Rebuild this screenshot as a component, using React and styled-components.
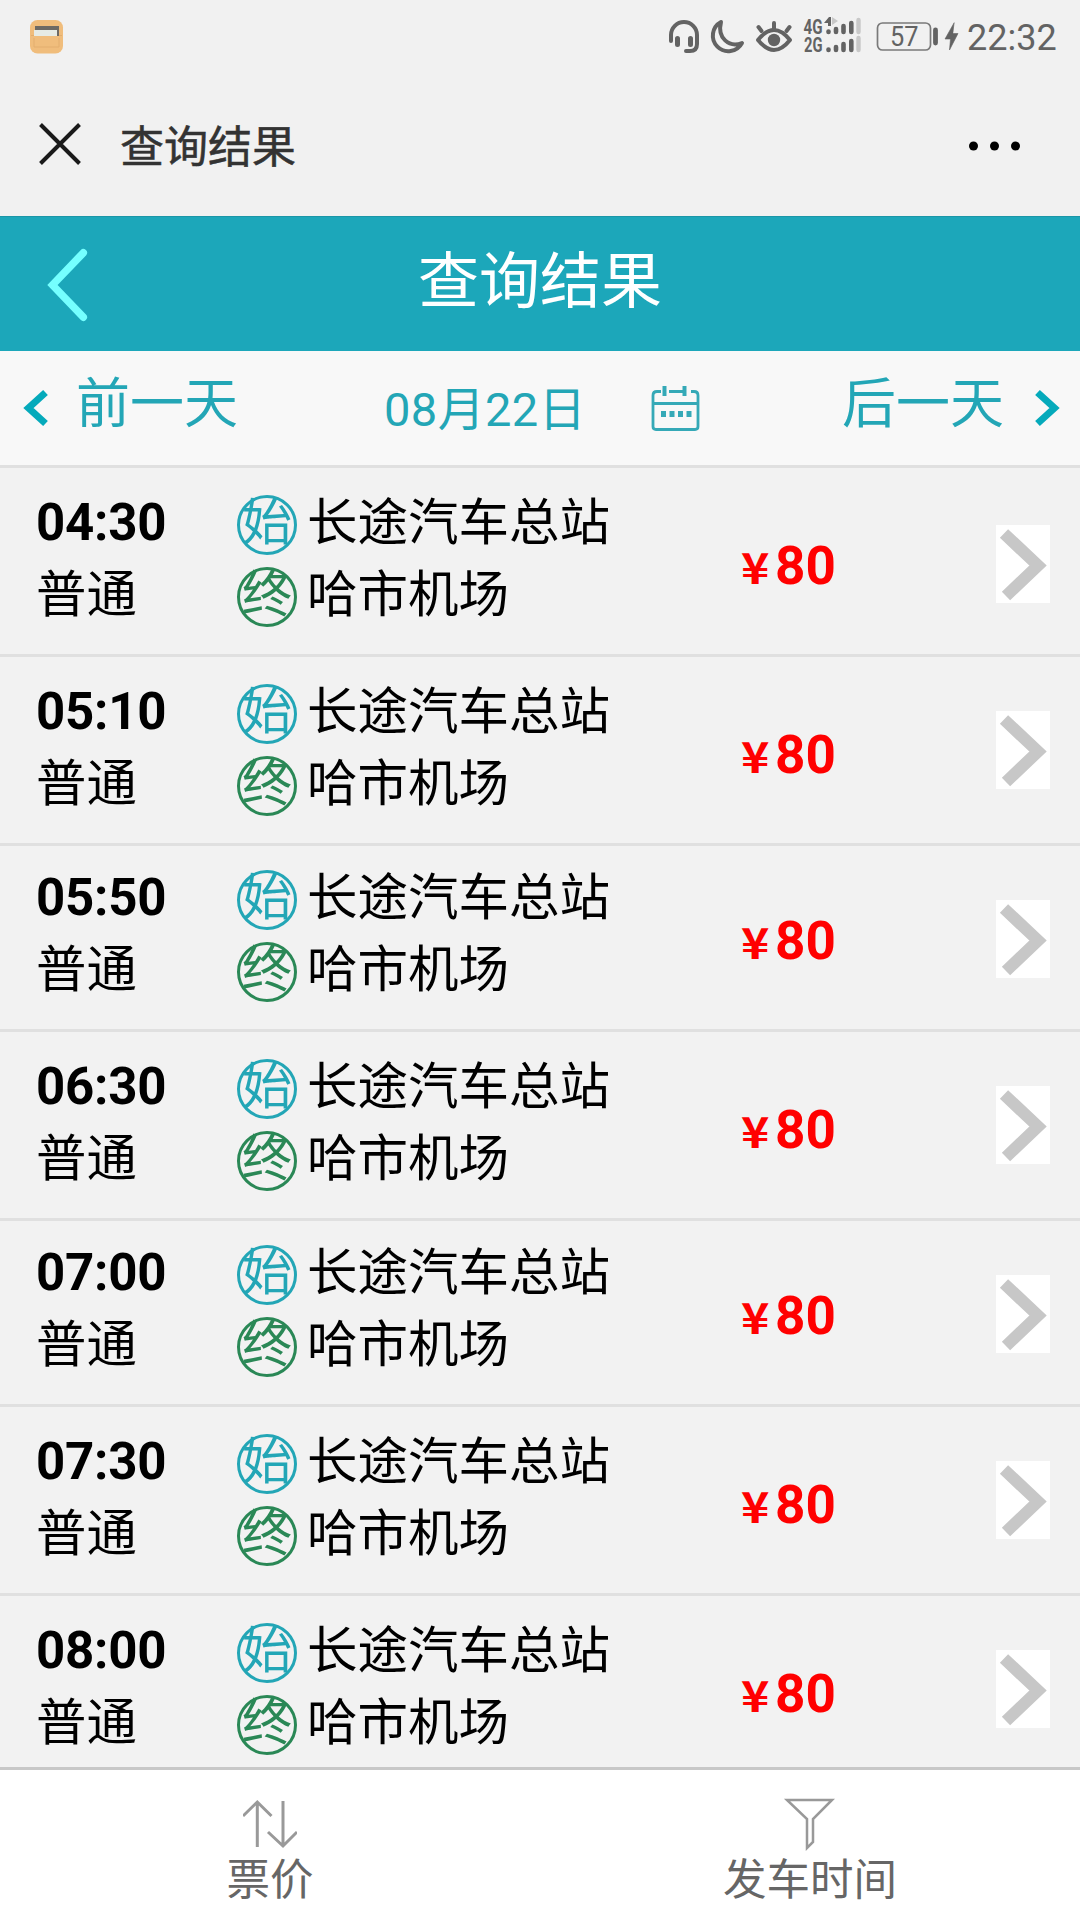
import React from 'react';
import styled, { createGlobalStyle } from 'styled-components';

const GlobalStyle = createGlobalStyle`
  * { box-sizing: border-box; }
  body { margin: 0; background: #f1f1f1; }
`;

const Screen = styled.div`
  width: 1080px;
  height: 1920px;
  display: flex;
  flex-direction: column;
  overflow: hidden;
  background: #f1f1f1;
  font-family: Roboto, "Noto Sans CJK SC", sans-serif;
  color: #000;
`;

const StatusBar = styled.div`
  height: 72px;
  flex: none;
  display: flex;
  justify-content: space-between;
  padding: 0 24px 0 30px;
`;

const StatusIcons = styled.svg`
  display: block;
  flex: none;
`;

const StatusRight = styled.div`
  display: flex;
  color: #636363;
`;

const Clock = styled.span`
  width: 90px;
  padding-left: 1px;
  font-size: 36px;
  line-height: 76px;
  white-space: nowrap;
`;

const TitleBar = styled.div`
  height: 144px;
  flex: none;
  display: flex;
  align-items: center;
  padding: 0 59px 0 39px;
`;

const TitleText = styled.h1`
  flex: 1;
  margin: 0 0 0 39px;
  padding-top: 7px;
  font-size: 44px;
  font-weight: 400;
  line-height: 64px;
  color: #333;
  -webkit-text-stroke: 0.5px #333;
`;

const MenuDots = styled.svg`
  display: block;
  margin-top: 3px;
`;

const NavBar = styled.header`
  height: 135px;
  flex: none;
  display: grid;
  grid-template-columns: 140px 1fr 140px;
  background: #1ca7ba;
  border-top: 1px solid #1b96a7;
`;

const NavTitle = styled.h2`
  margin: 0;
  text-align: center;
  font-size: 61px;
  font-weight: 400;
  line-height: 130px;
  color: #fff;
`;

const NavIcon = styled.svg`
  display: block;
`;

const DateBar = styled.div`
  height: 117px;
  flex: none;
  display: flex;
  background: #f8f8f8;
  border-bottom: 3px solid #e0e0e0;
  color: #23a6b6;
`;

const DayLink = styled.span`
  width: ${(p) => p.$width}px;
  font-size: 54px;
  line-height: 108px;
  white-space: nowrap;
`;

const DateText = styled.span`
  width: 264px;
  font-size: 47px;
  letter-spacing: 0.4px;
  line-height: 118px;
  white-space: nowrap;
`;

const List = styled.ul`
  flex: 1;
  min-height: 0;
  margin: 0;
  padding: 0;
  overflow: hidden;
  list-style: none;
  background: #f2f2f2;
`;

const Row = styled.li`
  height: ${(p) => p.$height}px;
  display: flex;
  border-bottom: 3px solid #e0e0e0;
`;

const TimeColumn = styled.div`
  width: 201px;
  padding: ${(p) => p.$top}px 0 0 36px;
`;

const Time = styled.div`
  font-size: 51px;
  font-weight: 700;
  letter-spacing: -0.2px;
  line-height: 72px;
`;

const Kind = styled.div`
  font-size: 50.4px;
  line-height: 72px;
`;

const StationColumn = styled.div`
  width: 501px;
  padding: ${(p) => p.$top}px 0 0 36px;
`;

const Station = styled.div`
  height: 72px;
  display: flex;
  align-items: center;
  font-size: 50.5px;
  line-height: 72px;
  white-space: nowrap;
`;

const Badge = styled.span`
  width: 60px;
  height: 60px;
  flex: none;
  display: flex;
  justify-content: center;
  margin: 4px 10px 0 0;
  border: 3px solid ${(p) => p.$color};
  border-radius: 50%;
  color: ${(p) => p.$color};
  font-size: 50px;
  line-height: 50px;
`;

const Price = styled.div`
  width: 294px;
  padding: 0 0 0 39px;
  display: flex;
  align-items: baseline;
  color: #f00;
  font-weight: 700;
`;

const Yen = styled.span`
  width: 34px;
  font-family: "Noto Sans CJK SC", sans-serif;
  font-size: 43px;
  line-height: 1;
  transform: scaleX(1.12);
  transform-origin: left;
`;

const Amount = styled.span`
  font-size: 53px;
  line-height: ${(p) => p.$line}px;
`;

const ArrowBox = styled.svg`
  display: block;
  margin-top: ${(p) => p.$top}px;
  background: #fff;
`;

const TabBar = styled.footer`
  height: 153px;
  flex: none;
  display: grid;
  grid-template-columns: 1fr 1fr;
  background: #fff;
  border-top: 3px solid #c8c8c8;
`;

const Tab = styled.div`
  display: flex;
  flex-direction: column;
  align-items: center;
  padding-top: 27px;
  font-size: 43.5px;
  line-height: 60px;
  color: #666;
`;

const departures = [
  { time: '04:30', height: 189, top: 19, arrow: 57 },
  { time: '05:10', height: 189, top: 19, arrow: 54 },
  { time: '05:50', height: 186, top: 16, arrow: 54 },
  { time: '06:30', height: 189, top: 19, arrow: 54 },
  { time: '07:00', height: 186, top: 16, arrow: 54 },
  { time: '07:30', height: 189, top: 19, arrow: 54 },
  { time: '08:00', height: 189, top: 19, arrow: 54 },
];

function AppIcon() {
  return (
    <StatusIcons width="34" height="72" viewBox="0 0 34 72">
      <rect x="0" y="20" width="33" height="33.5" rx="7.5" fill="#f0bd7c" />
      <path d="M1 35.5h31M4 38v9h25v-9" stroke="#e3ae6e" fill="none" />
      <rect x="5" y="26" width="24" height="10" fill="#6e6a64" />
      <rect x="4" y="30" width="23" height="6" fill="#e6ebe5" />
    </StatusIcons>
  );
}

function SystemIcons() {
  return (
    <StatusIcons width="300" height="72" viewBox="666 0 300 72" fill="none" stroke="#636363" strokeWidth="4" strokeLinecap="round">
      <path d="M671 41v-6a13 13 0 0 1 26 0v9q0 7-7 7h-4" />
      <path d="M677.5 38.500v6M690.500 38.500v6" strokeWidth="5" />
      <path d="M721 22a15.500 15.500 0 1 0 21 21c-13 5-25-5-21-21Z" strokeLinejoin="round" />
      <path d="M758 40q16-20 32 0q-16 20-32 0Z" strokeLinejoin="round" />
      <circle cx="774" cy="40" r="6.200" fill="#636363" stroke="none" />
      <path d="M774 23v6M758.500 27l3 4M789.500 27l-3 4" />
      <g fill="#636363" stroke="none" fontFamily="Roboto" fontWeight="700" fontSize="20.500">
        <text x="803.500" y="34" textLength="19" lengthAdjust="spacingAndGlyphs">4G</text>
        <text x="804" y="52" textLength="18.500" lengthAdjust="spacingAndGlyphs">2G</text>
      </g>
      <path d="M824 23l5-6h2v9h-3v-3Z" fill="#636363" stroke="none" />
      <path d="M832 17v8l6-4Z" fill="#c8c8c8" stroke="none" />
      <path d="M828.500 31.500v.5M836 29v3M843.500 26v6M851.300 23v9M828.500 49.500v.5M836 47v3M843.500 44v6M851.300 41v9" strokeWidth="4.600" />
      <path d="M858.500 20v12M858.500 38v12" stroke="#c8c8c8" strokeWidth="4.400" />
      <rect x="877.500" y="23" width="53" height="27" rx="5" stroke="#7a7a7a" strokeWidth="1.700" />
      <path d="M935.500 30v13" strokeWidth="4.800" />
      <text x="890" y="46" textLength="28.500" lengthAdjust="spacingAndGlyphs" fill="#636363" stroke="none" fontFamily="Roboto" fontSize="27.500">57</text>
      <path d="M954 23 945 39h5.500l-1 11 8.500-16.500h-5Z" fill="#636363" stroke="#636363" strokeWidth="0.600" />
    </StatusIcons>
  );
}

function DepartureRow({ item }) {
  return (
    <Row $height={item.height}>
      <TimeColumn $top={item.top}>
        <Time>{item.time}</Time>
        <Kind>普通</Kind>
      </TimeColumn>
      <StationColumn $top={item.top}>
        <Station><Badge $color="#23a6b6">始</Badge>长途汽车总站</Station>
        <Station><Badge $color="#2a8856">终</Badge>哈市机场</Station>
      </StationColumn>
      <Price><Yen>¥</Yen><Amount $line={item.top * 2 + 159}>80</Amount></Price>
      <ArrowBox $top={item.arrow} width="54" height="78" viewBox="0 0 54 78">
        <path d="M8 8.500 42 40.500 10 71" fill="none" stroke="#c7c7c7" strokeWidth="12" />
      </ArrowBox>
    </Row>
  );
}

export default function App() {
  return (
    <Screen>
      <GlobalStyle />
      <StatusBar>
        <AppIcon />
        <StatusRight>
          <SystemIcons />
          <Clock>22:32</Clock>
        </StatusRight>
      </StatusBar>
      <TitleBar>
        <svg width="42" height="42" viewBox="0 0 42 42"><path d="M1.500 1.500 40.500 40.500M40.500 1.500 1.500 40.500" stroke="#1a1a1a" strokeWidth="4" /></svg>
        <TitleText>查询结果</TitleText>
        <MenuDots width="52" height="10" viewBox="0 0 52 10"><circle cx="4.500" cy="5" r="4.500" /><circle cx="25.500" cy="5" r="4.500" /><circle cx="46.500" cy="5" r="4.500" /></MenuDots>
      </TitleBar>
      <NavBar>
        <NavIcon width="140" height="134" viewBox="0 217 140 134" fill="none">
          <path d="M83.300 252.800 52.500 285 83.300 317.200" stroke="#75ffff" strokeWidth="7.500" strokeLinecap="round" />
        </NavIcon>
        <NavTitle>查询结果</NavTitle>
      </NavBar>
      <DateBar>
        <NavIcon width="76" height="114" viewBox="0 351 76 114" fill="none">
          <path d="M45.500 392.500 28.500 408 45.500 423.500" stroke="#05aabb" strokeWidth="7" />
        </NavIcon>
        <DayLink $width={308}>前一天</DayLink>
        <DateText>08月22日</DateText>
        <NavIcon width="194" height="114" viewBox="648 351 194 114" fill="none" stroke="#35a9b7" strokeWidth="2.800">
          <path d="M661 391.500h-4q-4 0-4 4v31q0 3 3 3h39q3 0 3-3v-31q0-4-4-4h-3M669 391.500h14M653 403.500h45" />
          <path d="M664.500 386v10M684.500 386v10" strokeWidth="4" />
          <path d="M661 414h31" strokeWidth="6" strokeDasharray="5 3.500" />
        </NavIcon>
        <DayLink $width={164}>后一天</DayLink>
        <NavIcon width="74" height="114" viewBox="1006 351 74 114" fill="none">
          <path d="M1037.500 392.500 1054.500 408 1037.500 423.500" stroke="#05aabb" strokeWidth="7" />
        </NavIcon>
      </DateBar>
      <List>
        {departures.map((item) => <DepartureRow key={item.time} item={item} />)}
      </List>
      <TabBar>
        <Tab>
          <svg width="54" height="54" viewBox="243 1797 54 54" fill="none" stroke="#999" strokeWidth="3">
            <path d="M257.300 1847v-45M243 1816l14.300-14 14.200 14M283 1801v45M268 1832l15 14 14-14" />
          </svg>
          票价
        </Tab>
        <Tab>
          <svg width="54" height="54" viewBox="783 1797 54 54" fill="none" stroke="#999" strokeWidth="2.500">
            <path d="M787 1800h45l-19 19v23l-6 6v-29Z" />
          </svg>
          发车时间
        </Tab>
      </TabBar>
    </Screen>
  );
}
